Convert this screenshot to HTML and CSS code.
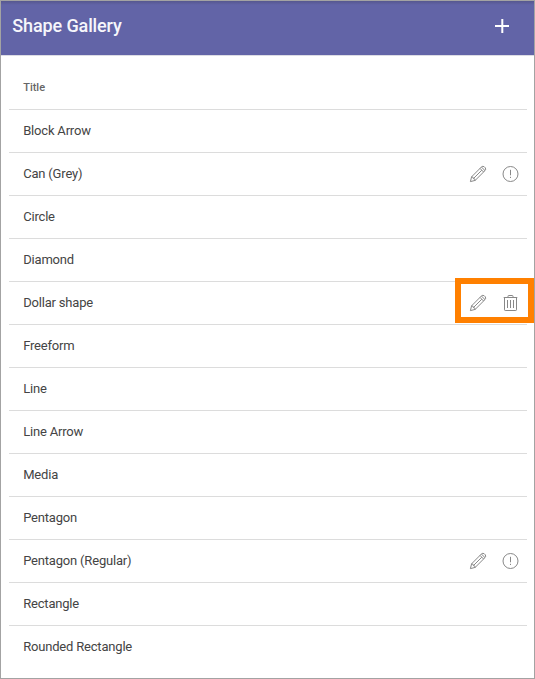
FILE: index.html
```html
<!DOCTYPE html>
<html lang="en">
<head>
<meta charset="utf-8">
<title>Shape Gallery</title>
<link rel="stylesheet" href="styles.css">
</head>
<body>
<svg class="defs" aria-hidden="true">
  <symbol id="pencil" viewBox="0 0 18 18">
    <path d="M1.4 16.6 2.6 11.8 12.4 2Q13.9.6 15.3 1.8L16.2 2.7Q17.4 4.1 16 5.6L6.2 15.4ZM2.6 11.8Q4.6 11.8 4.4 13.6 6.2 13.4 6.2 15.4M11 3.4 14.6 7M12.4 2 16 5.6M4.4 13.6 12.8 5.2"/>
  </symbol>
  <symbol id="info" viewBox="0 0 18 18">
    <circle cx="9.5" cy="9" r="7.5"/><path d="M9.5 4.8V10.3M9.5 11.8V13"/>
  </symbol>
  <symbol id="trash" viewBox="0 0 18 18">
    <path d="M2.7 3.5H16.3M7 3.5V2.2Q7 1.5 7.7 1.5H11.3Q12 1.5 12 2.2V3.5M3.5 3.5V15.8Q3.5 16.5 4.2 16.5H14.8Q15.5 16.5 15.5 15.8V3.5M6.5 6V14M9.5 6V14M12.5 6V14"/>
  </symbol>
</svg>
<main class="panel">
  <header class="header">
    <h1 class="heading">Shape Gallery</h1>
    <svg class="add" viewBox="0 0 14 14"><path d="M7.3 0V14M0 7H14"/></svg>
  </header>
  <div class="list">
    <div class="row row-title">Title</div>
    <div class="row">Block Arrow</div>
    <div class="row">Can (Grey)<span class="actions"><svg class="icon"><use href="#pencil"/></svg><svg class="icon"><use href="#info"/></svg></span></div>
    <div class="row">Circle</div>
    <div class="row">Diamond</div>
    <div class="row">Dollar shape<span class="actions"><svg class="icon"><use href="#pencil"/></svg><svg class="icon"><use href="#trash"/></svg></span><span class="highlight"></span></div>
    <div class="row">Freeform</div>
    <div class="row">Line</div>
    <div class="row">Line Arrow</div>
    <div class="row">Media</div>
    <div class="row">Pentagon</div>
    <div class="row">Pentagon (Regular)<span class="actions"><svg class="icon"><use href="#pencil"/></svg><svg class="icon"><use href="#info"/></svg></span></div>
    <div class="row">Rectangle</div>
    <div class="row">Rounded Rectangle</div>
  </div>
</main>
</body>
</html>
```
FILE: styles.css
```css
* { box-sizing: border-box; }
body { margin: 0; font-family: Roboto, "Liberation Sans", sans-serif; background: #fff; }
.defs { position: absolute; width: 0; height: 0; }
.panel { width: 535px; height: 679px; border: 1px solid #a3a3a3; overflow: hidden; }
.header {
  display: flex;
  align-items: center;
  justify-content: space-between;
  height: 55px;
  padding: 0 25px 4px 11.3px;
  color: #fff;
  background: linear-gradient(#56578f, #6264a7 4px);
  border-bottom: 1px solid #dcdce4;
}
.heading { margin: 0; font-size: 18px; font-weight: 500; line-height: 24px; letter-spacing: -0.12px; color: #f6f6fb; }
.add { width: 14px; height: 14px; fill: none; stroke: #fff; stroke-width: 2; }
.list { padding: 11px 7px 0 8px; }
.row {
  position: relative;
  display: flex;
  align-items: center;
  justify-content: space-between;
  height: 43px;
  padding: 0 8px 2px 14.2px;
  border-bottom: 1px solid #dcdcdc;
  font-size: 13px;
  letter-spacing: -0.19px;
  color: #444;
}
.row:last-child { border-bottom-color: transparent; }
.row-title { font-size: 11px; font-weight: 500; letter-spacing: 0; color: #666; }
.actions { display: flex; gap: 14px; margin-bottom: -2px; }
.icon { width: 18px; height: 18px; fill: none; stroke: #888; stroke-width: 1; }
.highlight {
  position: absolute;
  top: -4px;
  right: -7px;
  width: 79px;
  height: 45px;
  border: 6px solid #ff8000;
}
```
